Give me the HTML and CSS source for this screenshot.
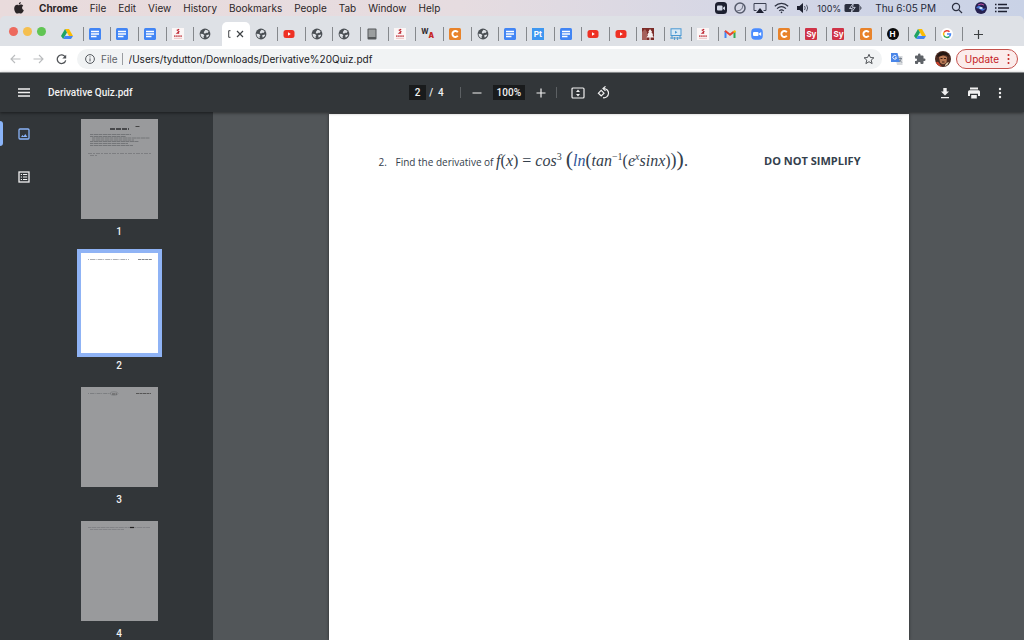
FILE: index.html
```html
<!DOCTYPE html>
<html lang="en">
<head>
  <meta charset="UTF-8" />
  <meta name="viewport" content="width=device-width, initial-scale=1.0"/>
  <title>Derivative Quiz.pdf</title>
  <link rel="stylesheet" href="styles.css">
</head>
<body>

  <!-- shared icons -->
  <svg class="sprite" aria-hidden="true">
    <symbol id="drive" viewBox="0 0 12 12">
      <path d="M4 1h4l4 7H8z" fill="#fbbc04"/>
      <path d="M4 1l2 3.500L2.200 11 0 8z" fill="#1ea362"/>
      <path d="M4 8h8l-2 3H2.200z" fill="#4285f4"/>
    </symbol>
    <symbol id="docs" viewBox="0 0 12 12">
      <rect width="12" height="12" rx="1.500" fill="#4285f4"/>
      <path d="M2 3.500h8M2 6h8M2 8.500h5.500" stroke="#fff" stroke-width="1.300"/>
    </symbol>
    <symbol id="school" viewBox="0 0 12 12">
      <rect width="12" height="12" fill="#fbf6f6"/>
      <path d="M7.200 1.200L5.300 2.200l1.600 1.400-1.700 1.600h2" fill="none" stroke="#c02a35" stroke-width="1.200"/>
      <path d="M2 8.200h8" stroke="#cf6168" stroke-width="1.800" stroke-dasharray="1.600 .5"/>
      <path d="M2 10.300h8" stroke="#e6b0b3" stroke-width=".8"/>
    </symbol>
    <symbol id="globe" viewBox="0 0 12 12">
      <circle cx="6" cy="6" r="5.400" fill="#4b5055"/>
      <path d="M1.500 5.800l2.400.2 1.500 1.300-.8 1.300.2 1.600C3 9.800 1.400 8.200 1.500 5.800zM6.400 1.700c1.400 0 2.600.8 3.200 2L8.400 5 7 4.700 6.400 5.600 4.800 5.200l.2-1.500z" fill="#dee1e6"/>
      <path d="M7.200 7.200l2.400-.6.6.6-1.400 1.900-1.200.4z" fill="#dee1e6"/>
    </symbol>
    <symbol id="youtube" viewBox="0 0 12 12">
      <rect x=".5" y="2" width="11" height="8" rx="2.500" fill="#ee3124"/>
      <path d="M5 4.300v3.400L7.800 6z" fill="#fff"/>
    </symbol>
    <symbol id="orange" viewBox="0 0 12 12">
      <rect width="12" height="12" rx="1.500" fill="#e8832b"/>
      <path d="M8.800 4.200A3 3 0 1 0 8.800 7.800" fill="none" stroke="#fff" stroke-width="1.900"/>
    </symbol>
    <symbol id="tablet" viewBox="0 0 12 12">
      <rect x="1.500" y=".5" width="9" height="11" rx="1" fill="#55585a"/>
      <rect x="2.500" y="1.500" width="7" height="7.500" fill="#9b9e9f"/>
    </symbol>
    <symbol id="tree" viewBox="0 0 12 12">
      <rect width="12" height="12" fill="#7c2c28"/>
      <path d="M0 4l3-3 2 3v8H0z" fill="#a5615b"/>
      <path d="M8 1l2.200 3H9.300l2 2.800h-1L12 9.500H8.600V12H7.400V9.500H4.500l1.600-2.700h-1L7 4h-.8z" fill="#f5eeee"/>
    </symbol>
    <symbol id="board" viewBox="0 0 12 12">
      <rect x="1" y=".8" width="10" height="6.700" fill="#d7e8f5" stroke="#4a98d2"/>
      <path d="M5 2.700v3l2.400-1.500z" fill="#4a98d2"/>
      <path d="M2 8v3M4.500 9v3M7.500 9v3M10 8v3M0 10h12" stroke="#5a9fd0" stroke-width="1.200"/>
    </symbol>
    <symbol id="gmail" viewBox="0 0 12 12">
      <path d="M1.500 10V3" stroke="#4285f4" stroke-width="2"/>
      <path d="M10.500 10V4" stroke="#34a853" stroke-width="2"/>
      <path d="M1 2.800l5 4 4-3.200" fill="none" stroke="#ea4335" stroke-width="2"/>
      <path d="M9.500 4.300l2-1.500" stroke="#fbbc04" stroke-width="2"/>
    </symbol>
    <symbol id="zoom" viewBox="0 0 12 12">
      <rect x=".2" y=".2" width="11.600" height="11.600" rx="4" fill="#4a8cff"/>
      <rect x="2" y="4" width="5.500" height="4" rx="1" fill="#fff"/>
      <path d="M8 5.500l2.200-1.400v3.800L8 6.500z" fill="#fff"/>
    </symbol>
    <symbol id="google" viewBox="0 0 12 12">
      <circle cx="6" cy="6" r="6" fill="#fff"/>
      <path d="M8.500 3.700A3.500 3.500 0 0 0 2.900 4.500" fill="none" stroke="#ea4335" stroke-width="1.500"/>
      <path d="M2.900 4.500a3.500 3.500 0 0 0 0 3" fill="none" stroke="#fbbc04" stroke-width="1.500"/>
      <path d="M2.900 7.500a3.500 3.500 0 0 0 5.400 1.100" fill="none" stroke="#34a853" stroke-width="1.500"/>
      <path d="M8.300 8.600A3.300 3.300 0 0 0 9.500 6H6" fill="none" stroke="#4285f4" stroke-width="1.500"/>
    </symbol>
  </svg>

  <header class="menubar">
    <nav class="menus">
      <button class="apple" aria-label="Apple">
        <svg width="10" height="12" viewBox="0 0 10 12"><path d="M6.800 0c.1 1.200-.8 2.400-2 2.400C4.700 1.200 5.700.2 6.800 0zM5 3.200c.5 0 1-.6 2-.6.900 0 1.700.5 2.200 1.200C7.400 5 7.700 7.400 9.800 8.200 9.200 9.900 8 11.600 7 11.600c-.8 0-1-.4-1.900-.4s-1.200.4-1.900.4C1.900 11.600.2 8.900.2 6.400c0-2.300 1.400-3.700 2.900-3.700.9 0 1.400.5 1.900.5z" fill="#2b2527"/></svg>
      </button>
      <button class="app-name">Chrome</button>
      <button>File</button>
      <button>Edit</button>
      <button>View</button>
      <button>History</button>
      <button>Bookmarks</button>
      <button>People</button>
      <button>Tab</button>
      <button>Window</button>
      <button>Help</button>
    </nav>
    <div class="status">
      <svg width="12" height="12" viewBox="0 0 12 12"><rect width="12" height="12" rx="3.500" fill="#1d2030"/><rect x="2" y="3.500" width="5.500" height="5" rx="1" fill="#d3d8e6"/><path d="M8 5.700l2-1.500v4L8 6.700z" fill="#d3d8e6"/></svg>
      <svg width="12" height="12" viewBox="0 0 12 12" fill="none" stroke="#555a6b"><circle cx="6" cy="6" r="5" stroke-width="1.500"/><path d="M3.500 8.500c3 .5 5.500-2 5-5"/></svg>
      <svg class="airplay" width="14" height="12" viewBox="0 0 14 12"><path d="M3.500 8.500H1v-7h12v7h-2.500" fill="none" stroke="#3c4152"/><path d="M7 6l4 5H3z" fill="#1d2030"/></svg>
      <svg width="15" height="12" viewBox="0 0 15 12" fill="none" stroke="#2c3040" stroke-width="1.200"><path d="M.8 4.200c4-3.700 9.400-3.700 13.400 0M3 6.600c2.700-2.400 6.300-2.400 9 0M5.200 8.900c1.400-1.200 3.200-1.200 4.600 0"/><circle cx="7.500" cy="10.400" r=".8" fill="#2c3040" stroke="none"/></svg>
      <svg width="14" height="12" viewBox="0 0 14 12"><path d="M1 4h2.500L7 1v10L3.500 8H1z" fill="#1d2030"/><path d="M8.500 4q1.500 2 0 4M10.500 2.800q2.300 3.200 0 6.400" fill="none" stroke="#555a6b"/></svg>
      <span class="percent">100%</span>
      <svg width="18" height="10" viewBox="0 0 18 10"><rect x=".5" y="1" width="15" height="8" rx="1.500" fill="#2b2f3e"/><path d="M16.500 3.500q1 1.500 0 3" stroke="#2b2f3e" fill="none"/><path d="M9.500 0L5.500 5.500h2.800L7 10l4.200-5.600H8.500z" fill="#2b2f3e" stroke="#cfd5e5" stroke-width=".9"/></svg>
      <time>Thu 6:05 PM</time>
      <svg class="search" width="12" height="12" viewBox="0 0 12 12" fill="none" stroke="#2c3040" stroke-width="1.200"><circle cx="5" cy="5" r="3.600"/><path d="M7.600 7.600L11 11"/></svg>
      <svg class="siri" width="12" height="12" viewBox="0 0 12 12"><circle cx="6" cy="6" r="6" fill="#252150"/><path d="M1 6q3-4 5-1t5 1q-3 4-5 2T1 6z" fill="#4a78d8"/><path d="M4 6q2-2 4 0-2 2-4 0z" fill="#d8f0ff"/><path d="M3 3q3-2 6 0" stroke="#b84a9c" fill="none"/></svg>
      <svg width="14" height="10" viewBox="0 0 14 10" stroke="#1d2030" stroke-width="1.400"><path d="M0 1.500h1.500M3 1.500h9M0 5h1.500M3 5h11M0 8.500h1.500M3 8.500h9"/></svg>
    </div>
  </header>

  <div class="window">
    <div class="tabstrip">
      <div class="lights">
        <button class="close" aria-label="Close"></button>
        <button class="minimize" aria-label="Minimize"></button>
        <button class="maximize" aria-label="Maximize"></button>
      </div>
      <div class="tabs">
        <div class="tab"><svg><use href="#drive"/></svg></div>
        <div class="tab"><svg><use href="#docs"/></svg></div>
        <div class="tab"><svg><use href="#docs"/></svg></div>
        <div class="tab"><svg><use href="#docs"/></svg></div>
        <div class="tab"><svg><use href="#school"/></svg></div>
        <div class="tab last"><svg><use href="#globe"/></svg></div>
        <div class="tab active">
          <svg class="clipped" viewBox="0 0 3 8"><path d="M2.500.7H.7v6.600h1.800" fill="none" stroke="#45484c"/></svg>
          <button aria-label="Close tab"><svg viewBox="0 0 8 8"><path d="M1 1l6 6M7 1L1 7" stroke="#3c4043" stroke-width="1.200"/></svg></button>
        </div>
        <div class="tab"><svg><use href="#globe"/></svg></div>
        <div class="tab"><svg><use href="#youtube"/></svg></div>
        <div class="tab"><svg><use href="#globe"/></svg></div>
        <div class="tab"><svg><use href="#globe"/></svg></div>
        <div class="tab"><svg><use href="#tablet"/></svg></div>
        <div class="tab"><svg><use href="#school"/></svg></div>
        <div class="tab"><span class="wa">W<b>A</b></span></div>
        <div class="tab"><svg><use href="#orange"/></svg></div>
        <div class="tab"><svg><use href="#globe"/></svg></div>
        <div class="tab"><svg><use href="#docs"/></svg></div>
        <div class="tab"><span class="letters pt">Pt</span></div>
        <div class="tab"><svg><use href="#docs"/></svg></div>
        <div class="tab"><svg><use href="#youtube"/></svg></div>
        <div class="tab"><svg><use href="#youtube"/></svg></div>
        <div class="tab"><svg><use href="#tree"/></svg></div>
        <div class="tab small"><svg><use href="#board"/></svg></div>
        <div class="tab small"><svg><use href="#school"/></svg></div>
        <div class="tab small"><svg><use href="#gmail"/></svg></div>
        <div class="tab small"><svg><use href="#zoom"/></svg></div>
        <div class="tab small"><svg><use href="#orange"/></svg></div>
        <div class="tab small"><span class="letters sy">Sy</span></div>
        <div class="tab small"><span class="letters sy">Sy</span></div>
        <div class="tab small"><svg><use href="#orange"/></svg></div>
        <div class="tab small"><span class="letters h">H</span></div>
        <div class="tab small"><svg><use href="#drive"/></svg></div>
        <div class="tab small"><svg><use href="#google"/></svg></div>
      </div>
      <button class="new-tab" aria-label="New tab"><svg width="9" height="9" viewBox="0 0 9 9"><path d="M4.500 0v9M0 4.500h9" stroke="#3c4043" stroke-width="1.200"/></svg></button>
    </div>

    <div class="toolbar">
      <button class="nav-btn" aria-label="Back"><svg width="11" height="10" viewBox="0 0 11 10" fill="none" stroke="#babcbe" stroke-width="1.100"><path d="M10.500 5H1M5 1L1 5l4 4"/></svg></button>
      <button class="nav-btn" aria-label="Forward"><svg width="11" height="10" viewBox="0 0 11 10" fill="none" stroke="#babcbe" stroke-width="1.100"><path d="M.5 5H10M6 1l4 4-4 4"/></svg></button>
      <button class="nav-btn" aria-label="Reload"><svg width="11" height="11" viewBox="0 0 11 11"><path d="M9.200 3A4.300 4.300 0 1 0 9.700 6.300" fill="none" stroke="#505357" stroke-width="1.300"/><path d="M10.200.7v3.900H6.300z" fill="#505357"/></svg></button>
      <div class="omnibox">
        <svg width="10" height="10" viewBox="0 0 10 10" fill="none" stroke="#55595e"><circle cx="5" cy="5" r="4.400"/><path d="M5 4.400v3M5 2.400v1"/></svg>
        <label for="url">File</label>
        <input type="text" id="url" value="/Users/tydutton/Downloads/Derivative%20Quiz.pdf">
        <button aria-label="Bookmark this page"><svg width="12" height="12" viewBox="0 0 12 12"><path d="M6 1.300l1.400 3.200 3.500.3-2.700 2.300.9 3.500L6 8.700l-3.100 1.900.9-3.500L1.100 4.800l3.500-.3z" fill="none" stroke="#505357"/></svg></button>
      </div>
      <button class="ext" aria-label="Translate"><svg width="12" height="12" viewBox="0 0 12 12"><path d="M4 3h7.500v9H6z" fill="#d5d8dc"/><path d="M0 0h6.500l2.500 9H0z" fill="#4a86e8"/><path d="M5.300 3.200A1.900 1.900 0 1 0 5.600 4.800H4" fill="none" stroke="#fff" stroke-width=".9"/><path d="M7.500 5.500h3.500M9.300 4.500v1M10.300 5.500q-.5 2-2 3M8.500 7l2.300 2.500" fill="none" stroke="#6b7683" stroke-width=".8"/></svg></button>
      <button class="ext puzzle" aria-label="Extensions"><svg width="12" height="12" viewBox="0 0 24 24"><path d="M20.500 11H19V7a2 2 0 0 0-2-2h-4V3.500a2.500 2.500 0 0 0-5 0V5H4a2 2 0 0 0-2 2v3.800h1.500a2.700 2.700 0 0 1 0 5.400H2V20c0 1.100.9 2 2 2h3.800v-1.500a2.700 2.700 0 0 1 5.400 0V22H17a2 2 0 0 0 2-2v-4h1.500a2.500 2.500 0 0 0 0-5z" fill="#5f6368"/></svg></button>
      <button class="ext profile" aria-label="Profile"><svg width="16" height="16" viewBox="0 0 16 16"><circle cx="8" cy="8" r="8" fill="#4a2a20"/><path d="M4 6q4-3 8 0l-.5 5.500Q8 15 5 11.500z" fill="#b97a55"/><path d="M2 6q1-5 6-5t6 5q-3-3-6-2T2 6z" fill="#241713"/><path d="M.8 11.500q2-1.500 3.200.5t3 3.500q-4.500-.5-6.200-4z" fill="#c9402c"/><path d="M10 14q2-3 4-3-1 3-4 4z" fill="#e8d9b5"/><path d="M5.500 7.500h2M9 7.500h2M7 11h2.500" stroke="#3a1e16"/></svg></button>
      <button class="update">Update <svg width="3" height="12" viewBox="0 0 3 12" fill="#c5221f"><circle cx="1.500" cy="2" r="1"/><circle cx="1.500" cy="6" r="1"/><circle cx="1.500" cy="10" r="1"/></svg></button>
    </div>

    <div class="pdf-bar">
      <div class="pdf-left">
        <button aria-label="Menu"><svg width="12" height="9" viewBox="0 0 12 9" stroke="#f1f1f1" stroke-width="1.500"><path d="M0 1h12M0 4.500h12M0 8h12"/></svg></button>
        <h1>Derivative Quiz.pdf</h1>
      </div>
      <div class="pdf-center">
        <input type="text" class="page-no" aria-label="Page" value="2">
        <span class="slash">/</span>
        <span>4</span>
        <i class="divider"></i>
        <button aria-label="Zoom out"><svg width="10" height="10" viewBox="0 0 10 10" stroke="#f1f1f1" stroke-width="1.200"><path d="M.5 5h9"/></svg></button>
        <input type="text" class="zoom-level" aria-label="Zoom" value="100%">
        <button aria-label="Zoom in"><svg width="10" height="10" viewBox="0 0 10 10" stroke="#f1f1f1" stroke-width="1.200"><path d="M.5 5h9M5 .5v9"/></svg></button>
        <i class="divider second"></i>
        <button class="fit" aria-label="Fit to page"><svg width="14" height="12" viewBox="0 0 14 12"><rect x="1" y="1" width="12" height="10" rx="1" fill="none" stroke="#f1f1f1" stroke-width="1.200"/><path d="M7 2.500L9 5H5zM7 9.500L5 7h4z" fill="#f1f1f1"/></svg></button>
        <button aria-label="Rotate"><svg width="14" height="14" viewBox="0 0 14 14" fill="none" stroke="#f1f1f1" stroke-width="1.200"><path d="M4.200 4.400L7 7.200 4.200 10 1.400 7.200zM6.700 2.600a4.600 4.600 0 1 1-.7 9.100"/><path d="M8.500.4L6 2.600l2.500 2.300" /></svg></button>
      </div>
      <div class="pdf-right">
        <button aria-label="Download"><svg width="10" height="12" viewBox="0 0 10 12" fill="#f1f1f1"><path d="M3.300 1h3.400v3.500H9L5 8.500 1 4.500h2.300zM1 10h8v1.200H1z"/></svg></button>
        <button aria-label="Print"><svg width="14" height="12" viewBox="0 0 14 12" fill="#f1f1f1"><path d="M3 .5h8v2H3zM2.500 3.200h9A1.500 1.500 0 0 1 13 4.700V9h-2V6.800H3V9H1V4.700a1.500 1.500 0 0 1 1.500-1.500zM4.200 8h5.600v3.500H4.200z"/></svg></button>
        <button aria-label="More actions"><svg width="4" height="12" viewBox="0 0 4 12" fill="#f1f1f1"><circle cx="2" cy="2" r="1.200"/><circle cx="2" cy="6" r="1.200"/><circle cx="2" cy="10" r="1.200"/></svg></button>
      </div>
    </div>

    <main class="viewer">
      <aside class="sidebar">
        <div class="rail">
          <button class="selected" aria-label="Thumbnails"><svg width="12" height="12" viewBox="0 0 12 12"><rect x="1" y="1" width="10" height="10" rx="1" fill="none" stroke="#8ab4f8" stroke-width="1.300"/><path d="M3 9l1.500-2 1.200 1.200L7.300 6 9.300 9z" fill="#8ab4f8"/></svg></button>
          <button aria-label="Outline"><svg width="12" height="12" viewBox="0 0 12 12" stroke="#f1f1f1"><rect x="1" y="1" width="10" height="10" fill="none" stroke-width="1.300"/><path d="M2.800 3.500H4M5 3.500h4.200M2.800 6H4M5 6h4.200M2.800 8.500H4M5 8.500h4.200" stroke-width="1.200"/></svg></button>
        </div>
        <div class="thumbs">
          <a href="#page-1">
            <svg viewBox="0 0 77 100" fill="none" stroke="#6a6c6f">
              <path d="M29 10h19" stroke="#2e2f30" stroke-width="1.600" stroke-dasharray="5 1"/><path d="M54.500 7.500h4" stroke="#444"/>
              <g stroke-width=".8" stroke-dasharray="3 .6 5 .4"><path d="M9 15.500h41M9 17.500h36M11 19h58M11 21h42M9 22.500h49M9 24.500h38M9 26.500h43"/><path d="M7 34.500h63M9 36.500h7" stroke-width=".6" stroke-dasharray="4 1 2 1"/></g>
            </svg>
            <span>1</span>
          </a>
          <a href="#page-2" class="current">
            <svg viewBox="0 0 77 100" fill="none" stroke="#9a9da1"><path d="M7 6.500h41" stroke-width=".8" stroke-dasharray="1 1 5 .6"/><path d="M57 6.500h14" stroke="#85898e" stroke-dasharray="3 .6"/></svg>
            <span>2</span>
          </a>
          <a href="#page-3">
            <svg viewBox="0 0 77 100" fill="none" stroke="#75777a"><path d="M7 6.500h23" stroke-width=".8" stroke-dasharray="1 1 4 .6"/><ellipse cx="33" cy="6.500" rx="4" ry="1.800" stroke-width=".6"/><path d="M31 7h5M55 6.500h15" stroke="#555" stroke-dasharray="3 .5"/></svg>
            <span>3</span>
          </a>
          <a href="#page-4">
            <svg viewBox="0 0 77 100" fill="none" stroke="#7c7e81"><path d="M7 6.500h62M9 8.500h34" stroke-width=".8" stroke-dasharray="3 .5 5 .6"/><path d="M49 6.500h4" stroke="#222" stroke-width="1.200"/></svg>
            <span>4</span>
          </a>
        </div>
      </aside>
      <section class="pages">
        <article class="page" id="page-2">
          <p class="question">
            <span class="number">2.</span>
            <span>Find the derivative of</span>
            <span class="math"><i>f</i>(<i>x</i>) = <i>cos</i><sup>3</sup> <span class="big">(</span><i class="blue">ln</i><span class="mid">(</span><i>tan</i><sup>−1</sup>(<i>e<sup>x</sup>sinx</i>)<span class="mid">)</span><span class="big">)</span>.</span>
          </p>
          <strong>DO NOT SIMPLIFY</strong>
        </article>
      </section>
    </main>
  </div>

</body>
</html>
```

FILE: styles.css
```css
* {
  box-sizing: border-box;
}

body {
  margin: 0;
  height: 100vh;
  display: flex;
  flex-direction: column;
  overflow: hidden;
  font-family: Inter, sans-serif;
  font-size: 10px;
  color: #2b2527;
  background: linear-gradient(90deg, #e9dbdc, #e6dce0 45%, #d3d6e6 75%, #c9d2e6);
}

button, input {
  font: inherit;
  color: inherit;
  background: none;
  border: none;
  padding: 0;
  margin: 0;
}

button {
  display: flex;
  align-items: center;
  justify-content: center;
}

svg {
  display: block;
  flex: none;
}

.sprite {
  width: 0;
  height: 0;
  position: absolute;
}

/* mac menu bar */
.menubar {
  display: flex;
  justify-content: space-between;
  align-items: center;
  height: 16px;
  padding: 0 15px 0 14px;
  flex: none;
}

.menus {
  display: flex;
  gap: 12px;
}

.apple {
  margin-right: 3px;
}

.app-name {
  font-weight: bold;
}

.status {
  display: flex;
  align-items: center;
  gap: 7px;
  color: #242838;
  white-space: nowrap;
}

.percent {
  font-size: 9px;
  margin-right: -4px;
}

.status time {
  margin: 0 8px 0 6px;
}

.siri {
  margin: 0 1px 0 5px;
}

/* browser window */
.window {
  flex: 1;
  min-height: 0;
  display: flex;
  flex-direction: column;
  border-radius: 5px 5px 0 0;
  overflow: hidden;
  background: #dee1e6;
}

.tabstrip {
  display: flex;
  height: 30px;
  flex: none;
  align-items: flex-end;
}

.lights {
  display: flex;
  gap: 5px;
  width: 56px;
  padding: 0 0 10px 9px;
}

.lights button {
  width: 9px;
  height: 9px;
  border-radius: 50%;
}

.close { background: #ed6a5e; }
.minimize { background: #f5bf4f; }
.maximize { background: #61c554; }

.tabs {
  flex: 1;
  display: flex;
}

.tab {
  flex: 39 1 0;
  min-width: 0;
  height: 24px;
  padding-left: 5px;
  display: flex;
  align-items: center;
  background: linear-gradient(#85888c, #85888c) right center / 1px 14px no-repeat;
}

.tab.small {
  flex-grow: 38;
}

.tab > svg {
  width: 12px;
  height: 12px;
}

.tab.last {
  background: none;
}

.tab.active {
  background: #fff;
  border-radius: 5px 5px 0 0;
  gap: 5px;
  padding-left: 6px;
}

.tab .clipped {
  width: 3px;
  height: 8px;
}

.tab.active button svg {
  width: 8px;
  height: 8px;
}

.wa {
  display: flex;
  font-size: 7px;
  font-weight: bold;
  line-height: 8px;
}

.wa b {
  padding-top: 4px;
  color: #c62828;
}

.letters {
  width: 12px;
  height: 12px;
  font-size: 8px;
  font-weight: bold;
  line-height: 12px;
  text-align: center;
  color: #fff;
}

.pt { background: #3e97f0; }

.sy {
  background: #cf3347;
  border-radius: 1px;
}

.h {
  background: #0a0a0a;
  border-radius: 50%;
}

.new-tab {
  width: 61px;
  height: 24px;
  padding-right: 30px;
}

.toolbar {
  display: flex;
  align-items: center;
  height: 26px;
  flex: none;
  padding: 0 6px 0 4px;
  background: #fff;
}

.nav-btn {
  width: 23px;
  height: 20px;
}

.omnibox {
  flex: 1;
  display: flex;
  align-items: center;
  height: 20px;
  margin: 0 9px 0 4px;
  padding: 0 7px 0 8px;
  border-radius: 10px;
  background: #f1f3f4;
}

.omnibox label {
  margin-left: 6px;
  padding-right: 4px;
  line-height: 12px;
  border-right: 1px solid #9a9da1;
  color: #5f6368;
}

.omnibox input {
  flex: 1;
  min-width: 0;
  margin-left: 6px;
  color: #202124;
}

.ext {
  margin-right: 11px;
}

.ext.puzzle {
  margin-right: 9px;
}

.ext.profile {
  margin-right: 5px;
}

.update {
  gap: 8px;
  height: 20px;
  padding: 0 7px 0 8px;
  border: 1px solid #c5524d;
  border-radius: 10px;
  background: #fbeceb;
  color: #c5221f;
}

/* pdf viewer */
.pdf-bar {
  display: flex;
  align-items: center;
  height: 40px;
  flex: none;
  padding: 0 22px 0 18px;
  border-top: 1px solid #85888a;
  background: #323639;
  color: #f1f1f1;
  font-family: Roboto, sans-serif;
  box-shadow: 0 1px 3px rgba(0,0,0,0.5);
  z-index: 1;
}

.pdf-left, .pdf-right {
  flex: 1;
  display: flex;
  align-items: center;
}

.pdf-left h1 {
  margin: 0 0 0 18px;
  font-size: 10px;
  font-weight: 500;
}

.pdf-right {
  justify-content: flex-end;
  gap: 17px;
}

.pdf-center {
  display: flex;
  align-items: center;
  font-weight: 500;
}

.pdf-center input {
  height: 15px;
  text-align: center;
  background: #191b1c;
}

.page-no {
  width: 17px;
}

.slash {
  margin: 0 5px 0 3px;
}

.divider {
  width: 1px;
  height: 11px;
  margin: 0 11px 0 16px;
  background: #5c6063;
}

.divider.second {
  margin: 0 14px 0 10px;
}

.zoom-level {
  width: 32px;
  margin: 0 11px;
}

.fit {
  margin-right: 12px;
}

.pdf-center .fit {
  margin-right: 12px;
}

.viewer {
  flex: 1;
  min-height: 0;
  display: flex;
  background: #525659;
}

.sidebar {
  width: 213px;
  display: flex;
  background: #323639;
  overflow: hidden;
}

.rail {
  width: 48px;
  padding-top: 9px;
  display: flex;
  flex-direction: column;
  gap: 18px;
}

.rail button {
  width: 48px;
  height: 25px;
  position: relative;
}

.rail .selected::before {
  content: "";
  position: absolute;
  left: 0;
  width: 3px;
  height: 25px;
  border-radius: 0 3px 3px 0;
  background: #8ab4f8;
}

.thumbs {
  flex: 1;
  padding: 7px 23px 0 0;
  display: flex;
  flex-direction: column;
  align-items: center;
  gap: 15px;
}

.thumbs a {
  font-family: Roboto, sans-serif;
  font-weight: 500;
  line-height: 13px;
  text-align: center;
  text-decoration: none;
  color: #f1f1f1;
}

.thumbs svg {
  width: 77px;
  height: 100px;
  margin-bottom: 6px;
  background: #999a9c;
}

.thumbs .current svg {
  background: #fff;
  outline: 4px solid #8fb3f5;
}

.pages {
  flex: 1;
  display: flex;
  justify-content: center;
  padding-top: 2px;
}

.page {
  width: 580px;
  padding: 35px 48px 0 50px;
  display: flex;
  justify-content: space-between;
  align-items: flex-start;
  background: #fff;
  box-shadow: 0 0 3px rgba(0,0,0,0.5);
  font-family: "Open Sans", sans-serif;
  font-size: 10px;
  line-height: 24px;
  color: #34404c;
}

.page strong {
  font-size: 11px;
}

.question {
  margin: 0;
  white-space: nowrap;
}

.number {
  margin-right: 6px;
}

.math {
  font-family: "Liberation Serif", serif;
  font-size: 16px;
}

.math sup {
  font-size: 10px;
  line-height: 0;
}

.math .big {
  font-size: 22px;
  line-height: 0;
}

.math .mid {
  font-size: 18px;
  line-height: 0;
}

.blue {
  color: #2f5597;
}
```
